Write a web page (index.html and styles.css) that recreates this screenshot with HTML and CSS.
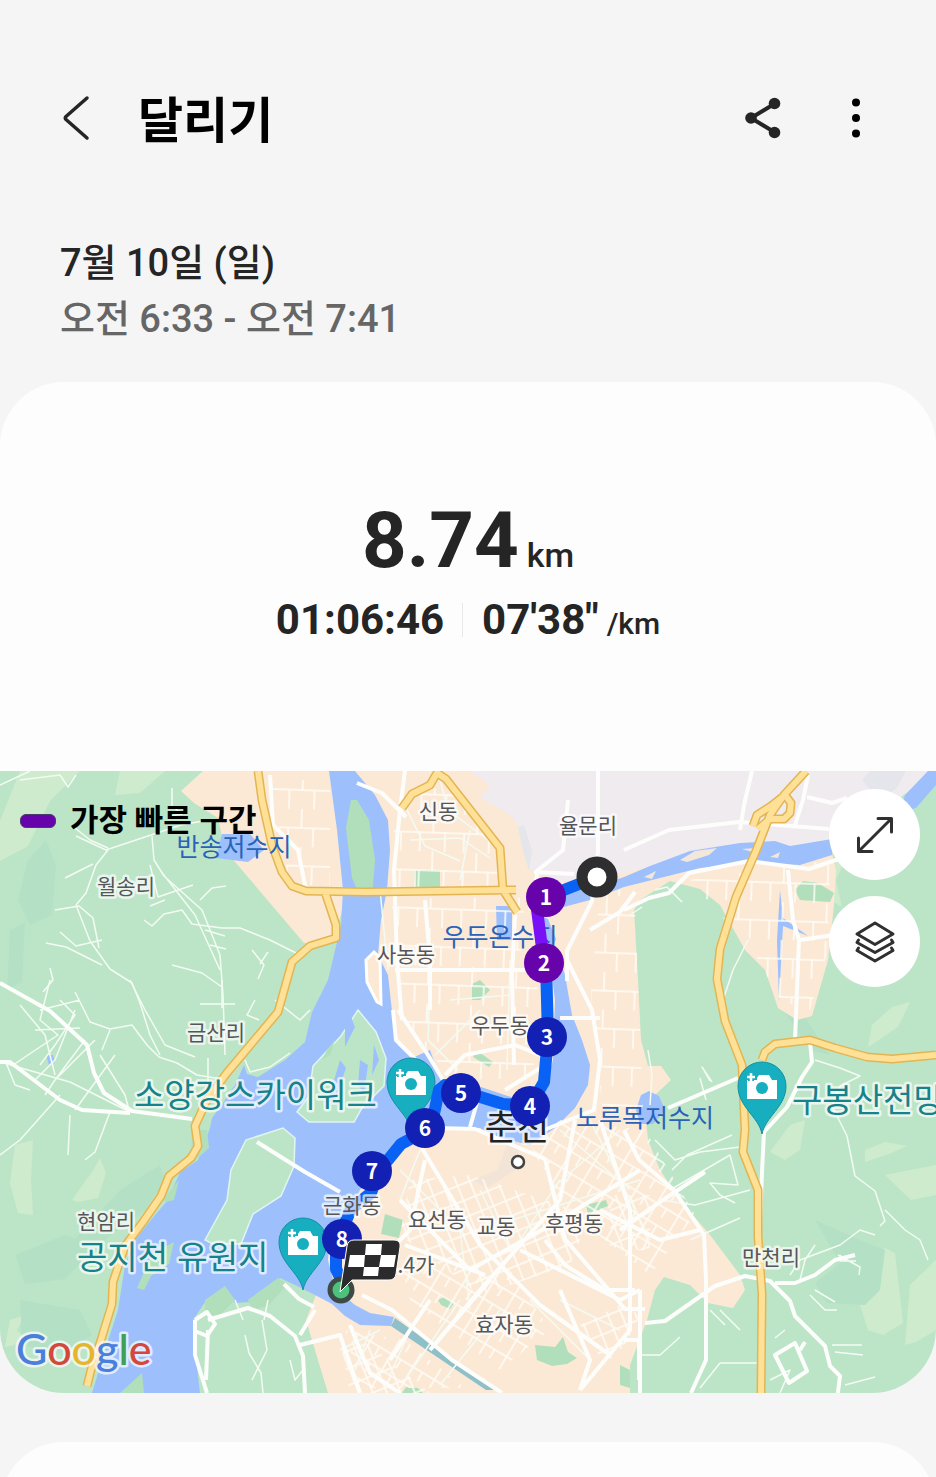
FILE: index.html
```
<!DOCTYPE html>
<html lang="ko">
	<head>
		<meta charset="utf-8">
		<meta name="viewport" content="width=device-width, initial-scale=1">
		<title>달리기</title>
		<link rel="stylesheet" href="styles.css">
	</head>
	<body>
		<header class="topbar">
			<button class="icon-btn back" type="button" aria-label="뒤로">
				<svg width="30" height="48" viewBox="0 0 30 48"><path d="M26 4 5 22.500Q3.500 24 5 25.500L26 44" fill="none" stroke="#252525" stroke-width="3.500" stroke-linecap="round" stroke-linejoin="round"/></svg>
			</button>
			<h1>달리기</h1>
			<button class="icon-btn share" type="button" aria-label="공유">
				<svg width="40" height="44" viewBox="0 0 40 44" fill="#252525"><path d="M33 7.500 9 22l24 14.500" fill="none" stroke="#252525" stroke-width="4"/><circle cx="32.500" cy="7.500" r="5.800"/><circle cx="9" cy="22" r="5.800"/><circle cx="32.500" cy="36.500" r="5.800"/></svg>
			</button>
			<button class="icon-btn more" type="button" aria-label="더보기">
				<svg width="12" height="44" viewBox="0 0 12 44"><circle cx="6" cy="6.500" r="4"/><circle cx="6" cy="22" r="4"/><circle cx="6" cy="37.500" r="4"/></svg>
			</button>
		</header>
		<div class="when">
			<p class="date">7월 10일 (일)</p>
			<p class="time">오전 6:33 - 오전 7:41</p>
		</div>
		<main class="card">
			<div class="stats">
				<p class="distance">8.74<span>km</span></p>
				<div class="detail">
					<p>01:06:46</p>
					<p class="pace">07'38"<span>/km</span></p>
				</div>
			</div>
			<div class="map">
				<svg class="map-img" viewBox="0 771 936 622" role="img" aria-label="달리기 경로 지도">
					<defs>
						<pattern id="blocks" width="44" height="38" patternUnits="userSpaceOnUse" patternTransform="rotate(2)">
							<path d="M0 19h44M22 0v19M9 19v19M34 19v19" class="lane"/>
						</pattern>
						<pattern id="city" width="25" height="19" patternUnits="userSpaceOnUse" patternTransform="rotate(31)">
							<path d="M0 9h25M8 0v19M19 9v10" class="lane"/>
						</pattern>
						<pattern id="dense" width="13" height="16" patternUnits="userSpaceOnUse" patternTransform="rotate(-22)">
							<path d="M0 7h13M6 0v16" class="lane"/>
						</pattern>
						<g id="photo-pin">
							<path d="M0 47C-3 30-24 20-24-1A24 24 0 0 1 24-1C24 20 3 30 0 47z" fill="#17aebf" stroke="#168fa3"/>
							<path d="M-15-7h10v-2l2-3h10l3 5h5v19h-30z" fill="#fff"/>
							<circle cx="0" cy="1" r="6" fill="#17aebf"/>
							<path d="M-11-15v9M-16-10.500h10" stroke="#17aebf" stroke-width="6"/>
							<path d="M-11-14v8M-15-10h8" stroke="#fff" stroke-width="2.500"/>
						</g>
						<path id="highways" d="M258 771l4 29 10 45 10 27 10 14 14 5 60 1 150-2M402 808l10-14 18-9 7-12 9 6 54 69 3 42 14 22M325 892l11 33 0 13-26 8-18 16-14 50-52 62-20 28-11 24 3 20-7 12-22 18-8 20-18 26-18 24-12 36-1 22-11 36-10 30-4 16M806 771l-22 24-14 20-14 36-20 46-16 52-3 30 8 42 17 44 3 65-2 22 15 38 0 46 4 58-1 100M762 1060l3-8 10-8 35-4 25 8 32 9 25 2 44-4M753 826l4-11 14-9 14-11 6 8-1 10-6 6-14 0-12 10"/>
					</defs>

					<!-- land -->
					<rect y="771" width="936" height="622" fill="#bce5c7"/>
					<g fill="#cfebcd">
						<path d="M20 771h60l-30 30-22 45-28 15v-40zM120 771h45l-25 22-25 2zM15 1145l18-5-2 40 2 35-15-2-8-30zM72 1200l20-28 8-14 6 15-8 25-20 4zM870 1260l15-12 10 5 8 70-20 12-15-5-8-25zM905 1345l5-60 26-25v70l-20 12zM790 1125l15-5-5 30-15 10-15-8zM872 1025l20-18 18-5-12 25-30 20zM865 1150l20-8 22 4-18 8-24 8zM885 1175l51-10v30l-25 5zM10 1320l15-5-8 15 10 12-22 5zM825 870l30-20 22 35-12 35-35-20z"/>
					</g>
					<g fill="#b4e0c5">
						<path d="M28 860l18-20 10 25-4 50-22 10-12-25zM10 930l15-8-3 60-15 8zM120 1190l40-25 5 15-20 30-40 30-40 10zM15 1255l50-20 30 12-30 32-40 5zM20 1300l60 10 12 25-30 20-40-10zM815 1220l45 20 25 10-5 40-15 15-38-2-12-20 25-20zM900 800l36-20v50l-25 5zM770 990l20 5 40 60-20-5z"/>
					</g>
					<path fill="#fbe9d6" d="M203 771H345V900L333 943H304L225 850 218 818 194 803 181 791z"/>
					<path fill="#fbe9d6" d="M340 771H580V870L625 870 700 848 830 845 836 870 834 905 828 960 812 1016 797 1020 778 1008 765 970 745 950 720 905 700 889 670 881 640 900 634 910 638 980 641 1040 648 1066 661 1066 671 1080 655 1095 645 1110 648 1140 660 1170 680 1200 710 1235 740 1275 745 1290 733 1308 708 1303 690 1285 664 1277 655 1290 647 1320 630 1365V1393H328L318 1360 306 1320 318 1290 330 1220 360 1160 365 940z"/>
					<path fill="#f0ebef" d="M470 771H936L830 850 760 845 690 855 625 873 560 882 530 870 525 835 510 815 480 797 490 785z"/>
					<path fill="#e5e6eb" d="M518 828l6-3 8 25-3 20-5-15zM862 780l8-9h36l-10 18-18 10z"/>
					<path fill="#bce5c7" d="M936 778L905 805 880 845 845 860 836 880 845 920H936z"/>
					<path fill="#b1dfbc" d="M414 870h26v18h-25zM472 984l8-4 10 10-10 10h-8zM476 1050l17 12-4 5-16-10zM385 1214l18 6-4 18-18-4zM438 1300l6-3 10 6-4 6-9-4zM535 1345l20 2 8-10 5 15 9 6-10 6-15 2-15-6zM586 1205l20-5 2 6-20 8zM620 1365l10 5v18l-10-3zM795 890l8-9 15 2 16 10-4 9-30-2zM402 1393l4-6 12 1 5 5z"/>
					<path fill="#f3e4d8" d="M472 1180l25-10 12-30 12 0-6 30-28 18z"/>

					<!-- water -->
					<path fill="#9dc0fd" d="M329 771L337 830 343 890 341 925 328 980 312 1012 305 1042 285 1060 258 1077 247 1074 244 1065 235 1085 225 1100 212 1118 210 1128 198 1160 180 1172 168 1200 155 1215 135 1240 125 1265 118 1310 105 1350 92 1393H200L195 1350 193 1320 205 1302 225 1288 235 1303 250 1302 262 1296 280 1278 295 1285 315 1295 332 1304 345 1316 360 1325 391 1326 394 1317 370 1313 355 1305 335 1288 328 1260 330 1235 345 1220 360 1190 378 1165 392 1150 405 1138 440 1127 480 1128 500 1138 530 1145 555 1128 575 1108 588 1085 590 1065 582 1040 572 1015 565 975 560 960H550L555 1000 553 1060 545 1090 520 1100 490 1090 460 1080 445 1085 437 1070 430 1050 412 1058 398 1045 393 1020 388 975 378 955 381 920 387 890 390 850 388 820 375 795 355 771z"/>
					<g fill="#9dc0fd">
						<path d="M560 890L600 885 624 877 650 866 690 851 740 843 775 841 790 846 832 839V855L800 865 750 863 700 868 660 878 624 887 590 900 560 908z"/>
						<path d="M936 771H928L905 795 900 812 916 808 936 785zM496 906h16v34h-15zM540 915l8 4 8 20-8 20-8-20zM222 834h28l14 16-16 12-32-4zM636 1110l5-15 8-4 10 5 6 14-12 14h-13zM46 1055h7l2 7-6 3zM780 890l3 28 25 18-25-10-4 76-2-62z"/>
					</g>
					<path fill="#8fc0c9" d="M395 1318l100 72h-9l-95-64z"/>
					<g fill="#bce5c7" stroke="#e2f4f1" stroke-width="1.500">
						<path d="M358 1010l18 22 10 26-2 28-22 22-8 14-45 0-12-10 12-16 4-30 28-30zM205 1240l22-40 4-30 15-30 37-12 12 10-1 28-13 30-28 18-12 30-28 0z"/>
					</g>
					<path fill="#b1dfbc" d="M351 800h6l12 20 6 40-3 36h-12l-8-18-6-50zM120 1393l22-20 2 20zM192 1130h15l2 18-18 16zM163 1200l16-20-5 20-8 2zM137 1288l15-34 22-12-5 22-18 12-7 14zM327 1050l8-10-5 15-8 5zM205 1300l20-14 10 14-15 15-15 0zM248 1300l30-22 10 6-20 22-15 4z"/>
					<path fill="#9dc0fd" d="M340 1060l6 8-12 35-6-2zM360 1060l8 5-4 28-6-8zM345 1025l6-8 4 10-10 20zM374 1045l5 15-7 15z"/>
					<path fill="#f3e6db" d="M680 860l15-9 22-3-8 7-22 7zM644 877l12-6-4 8zM742 849l14-1v5zM770 857l10-5-2 6z"/>
					<path fill="#fbe9d6" stroke="#fff" stroke-width="3" d="M366 960l8-8 6 6 1 46-4-2-10-20z"/>

					<!-- small streets -->
					<path fill="url(#blocks)" d="M395 800l50-15 55 65-2 38H392zM391 898H525l-5 60 18 30-5 90-80 2-50-60zM600 890h34l4 90 5 130-40 5-12-120zM690 880l140-20-2 90-18 60-30-10-30-55-50-50zM270 780h60v105h-40z"/>
					<path fill="url(#city)" d="M345 1330l60 10 60 48H360zM560 1120l85 10 50 85-45 60-90-70-30-60zM400 1260l110 10 40 60-50 40-90-70z"/>
					<path fill="url(#dense)" d="M410 1180l60-5 120 40-20 50-90 30-80-60zM340 1340l30 5 60 48h-80zM580 1325l40-20 20 10-15 30-20 20zM610 1195h40v55h-40z"/>
					<g class="lane thin">
						<path d="M0 785l30-14M20 780l40-5 8 12 8-12M172 788v18l10 8-12 2M75 828l15 12 18 8M76 836l30 14 45-15 30-10 22-4M108 850l-12 15-10 28-10 12M65 878l28-14M76 905l14 36 20 28 22 14 8 20 10 32 10 20M55 910l24-4 14 12 6 30M60 932l16 14 26-6M46 943l20 4 36 18M152 836l2 24 10 16 38 34 18 45 3 40 2 60M160 870l35 45 25 55M150 865l8 32 35-12M165 900l-15 6M200 900l12-12 14-2M144 920l8 6 12-12 18-4 10 14 30 4 18 0 30 12 30 15M172 965l30 8 20 14M205 930l20 6M210 945l16 4M50 968l3 12-10 12M252 950l12 15-6 14M268 952l-8 12"/>
						<path d="M0 1062l35 10 35 10 40 20 20 10M20 1005l25 30 10 40M50 980l-10 40 18 15-45 30M60 1000l15 15-20 30-15 20M75 1010l-20 50-20 20M85 1040l-30 40-10 15M40 1010l40-10M35 1030l45-2M100 1055l25 40 4 15M115 1055l-40 55M95 1040l-40 40M60 1095l-40 45-20 15M70 1115l-2 40M110 1112l-15 40-10 8M5 1060l10 25 15 5M75 992l15 30 20 7 22-4 15 20 12 12 18 6 20 12 30 5M130 980l15 30 20 35 30 12M110 1030l-8 20M222 980v28M200 1004h35M208 1058v25M245 1060l5 12 20-5 20-14M275 1000l25 20 10-10M255 1000l-8 15 12 5"/>
						<path d="M245 1335l4 18 12 20 2 20M262 1320l5 30-15 30M235 1300l8 20M268 1300l-4 20M290 1360l5 20 8-10"/>
						<path d="M655 890l12-3 15 15M630 915l12-8M648 1050l4 25-2 30M655 1140l20 20 25-8 40-5M672 1170l15-15 45-20M670 1190l60-35 8 30-28-2 10 12 15 8M660 1200l35 5 55-15M690 1240l50-22M712 1082l-10-15 8 14M706 1100l-6-22M748 940l-15 30-10 30"/>
						<path d="M815 1060l25 8 20 8-20 10-8 20 15 30 8 40 20 15 10 30-5 5M885 1210l20 20 15 10 8 20M790 1275l10-15 40-15 20-15 15 5M800 1280l5-20 10-15M810 1295l15 15 12 0M815 1290l20 12M840 1255l6 6-6 0 16 0M838 1255l22 12-1 8M770 1380l20-10-10 23M832 1345l30 0M835 1352l28 3M720 1310l20 20M710 1310l15 15M760 1363l-40 0-20 25M640 1355l20 0 20-18M785 1330l-10 8M900 1393l10-10M845 1385l30-8"/>
						<path d="M380 890l8 80M405 806l20 40 35 15M410 840l50-2 30 20M415 870v20M470 830l-10 50M440 780l8 30 40 30M430 985l-2 55 30 30M450 1000l60-5M510 960l-3 110M480 1010l-45 45M530 1300l60 60M560 1180l-60 90M620 1130l-70 60M640 1180l-160 50M560 1130l70 60M590 1120l60 120M400 1170l60 60 10 80M420 1150l-20 50M480 1190l30 60M340 1350l40-20M560 1300l60 30M460 1300l-55 80M500 1310l-60 75M370 1330l-15 40M410 1330l-20 45"/>
					</g>

					<!-- main streets -->
					<g class="street">
						<path d="M0 983l50 28 37 34 7 28 10 20 28 18 60 8M0 1062l10 0 50 38 22 10 48 3M257 1142l48 30 35 20M405 770l-5 40-6 60 3 90 5 60M357 783l25 10 24 24M270 775l3 50 25 25 8 40"/>
						<path d="M395 970h145M425 900l5 60 0 50M515 915l-3 60 2 90M398 1010l30 45 15 25M393 1010l3 30 20 20M445 1075l20-20 50-10 25 10M480 1092l-10 35M505 1090l40-25M435 1128l40 1 70 30 20 80 60 70 20 0M567 960l25 50 8 50-6 50-50 20M598 771v80l-6 50-25 50 0 30M568 800l-5 50-25 20-8 40M534 872l40 2M590 930l30-18 15-20M560 1018h40"/>
						<path d="M420 1145l60 100 60 60 70 50M425 1160l-15 70-30 30M400 1200l70 70 90-50 80-50M575 1120l-15 80-80 90-50 60M600 1120l30 90 0 120-50 60M520 1250l100 50 20-10M600 1210l60 30 40-10M362 1295l30 15 60 50 50 33M350 1325l10 25 10 23 30 20M300 1345l40-10 20 58M545 1240l20 25 40 25 30 0M560 1290l30 70-10 30M405 1245l80 30M430 1300l-40 60M490 1280l-60 70"/>
						<path d="M624 850l45-20 70-8 90 7M624 910l25-12 20-5 20-20 60-12 60 8 30-10M740 830l4-25 8-34M795 825l8-25 5-25M807 797l25 6 15-5M788 870l5 50 6 20-4 100M800 940l40-6M810 1042l2 20-10 15-15 30-23 25-2 40-2 50M668 1108l35-15 35-15M624 1130l15 30 35 30 30 45 2 45 0 80-15 33M620 1230l40-28 45-30M645 1323l20-2 50-35 30-10 25 5 20 20 5 15 30 30 5 20 10 10-3 24M640 1290v103M775 1283l20 0 20-8 20-15 20-5M624 1340l15 0v40"/>
						<path d="M284 1284l15 15 15 8M195 1320l12-8 8 12-8 12-12-5M195 1320v35l12 38M208 1330l-2 50M208 1320l40-12 22 8 25 20 8 20 2 37M300 1335l15-25M775 1355l20-12 12 28-18 12zM800 1350l5-8"/>
					</g>

					<use href="#highways" class="highway"/>
					<use href="#highways" class="highway-fill"/>

					<g class="lake">
						<text x="234" y="856">반송저수지</text>
						<text x="500" y="946">우두온수지</text>
						<text x="645" y="1127">노루목저수지</text>
					</g>
					<text class="town" x="517" y="1140">춘천</text>
					<circle cx="518" cy="1162" r="6" fill="#fff" stroke="#444" stroke-width="2.500"/>
					<use href="#photo-pin" x="411" y="1083"/>
					<use href="#photo-pin" x="762" y="1087"/>
					<use href="#photo-pin" x="303" y="1243"/>

					<!-- route -->
					<g fill="none" stroke="#0a62f5" stroke-width="12" stroke-linejoin="round">
						<path d="M597 877l-51 20M546 963l2 74-4 45-14 24-27-2-42-13-16-6-6 5-8 38-30 16-22 27-8 22-20 16-10 24-5 20 0 16 8 16"/>
						<path d="M536 902l8 61" stroke="#7a10f5"/>
					</g>

					<g class="place">
						<text x="126" y="894">월송리</text>
						<text x="438" y="819">신동</text>
						<text x="588" y="833">율문리</text>
						<text x="406" y="962">사농동</text>
						<text x="500" y="1033">우두동</text>
						<text x="216" y="1040">금산리</text>
						<text x="106" y="1229">현암리</text>
						<text x="352" y="1213">근화동</text>
						<text x="437" y="1227">요선동</text>
						<text x="496" y="1234">교동</text>
						<text x="574" y="1231">후평동</text>
						<text x="416" y="1273">.4가</text>
						<text x="504" y="1332">효자동</text>
						<text x="771" y="1265">만천리</text>
					</g>
					<g class="sight">
						<text x="134" y="1107">소양강스카이워크</text>
						<text x="77" y="1269">공지천 유원지</text>
						<text x="792" y="1112">구봉산전망</text>
					</g>

					<!-- lap markers -->
					<circle cx="597" cy="877" r="15" fill="#fff" stroke="#2e2e30" stroke-width="11"/>
					<g fill="#1220b4">
						<circle cx="547" cy="1037" r="20"/><circle cx="530" cy="1106" r="20"/><circle cx="461" cy="1093" r="20"/><circle cx="425" cy="1128" r="20"/><circle cx="372" cy="1171" r="20"/><circle cx="342" cy="1239" r="20"/>
					</g>
					<g fill="#6703ab"><circle cx="546" cy="897" r="20"/><circle cx="544" cy="963" r="20"/></g>
					<g class="lap">
						<text x="546" y="905">1</text>
						<text x="544" y="971">2</text>
						<text x="547" y="1045">3</text>
						<text x="530" y="1114">4</text>
						<text x="461" y="1101">5</text>
						<text x="425" y="1136">6</text>
						<text x="372" y="1179">7</text>
						<text x="342" y="1247">8</text>
					</g>
					<circle cx="341" cy="1290" r="11" fill="#4cc27c" stroke="#3e4a45" stroke-width="5"/>
					<path d="M340 1292l7-46q1-6 7-6h40q7 0 6 7l-4 27q-1 6-7 6h-37z" fill="#2b2b2d" stroke="#fff" stroke-width="1"/>
					<path d="M366 1244h16l-1 11h-16zM350 1255h15l-1 12h-16zM381 1255h15l-2 12h-15zM364 1267h15l-1 9h-15z" fill="#fff"/>
					<text class="google" x="16" y="1365"><tspan fill="#4a80dc">G</tspan><tspan fill="#d3483d">o</tspan><tspan fill="#e5b530">o</tspan><tspan fill="#4a80dc">g</tspan><tspan fill="#3f9f57">l</tspan><tspan fill="#d3483d">e</tspan></text>
				</svg>
				<p class="legend">가장 빠른 구간</p>
				<div class="map-tools">
					<button type="button" aria-label="지도 확대">
						<svg width="40" height="40" viewBox="0 0 40 40"><path d="M4 36 36 4M23 3.500h13.500V17M3.500 23v13.500H17"/></svg>
					</button>
					<button type="button" aria-label="지도 종류">
						<svg width="42" height="42" viewBox="0 0 42 42"><path d="M21 2 39 13 21 23.500 3 13zM4.500 19 3 21.500 21 31.500 39 21.500 37.500 19M4.500 27 3 29.500 21 40 39 29.500 37.500 27"/></svg>
					</button>
				</div>
			</div>
		</main>
		<div class="next"><section class="next-card"></section></div>
	</body>
</html>
```
FILE: styles.css
```
* {
	box-sizing: border-box;
}
body {
	display: flex;
	flex-direction: column;
	min-height: 100vh;
	margin: 0;
	background-color: #f5f5f5;
	color: #252525;
	font-family: Roboto, "Noto Sans CJK KR", sans-serif;
}
h1, p {
	margin: 0;
}
button {
	display: flex;
	align-items: center;
	justify-content: center;
	padding: 0;
	border: none;
	background: none;
	cursor: pointer;
}
svg {
	display: block;
}
.topbar {
	display: flex;
	align-items: center;
	padding: 78px 56px 0 52px;
	height: 158px;
}
.icon-btn {
	width: 48px;
	height: 64px;
}
.topbar h1 {
	flex: 1;
	margin-left: 38px;
	padding-top: 7px;
	color: #000;
	font-size: 49px;
	line-height: 72px;
	font-weight: 700;
}
.share {
	margin-right: 46px;
}
.when {
	padding: 77px 60px 35px;
	font-size: 38px;
	line-height: 56px;
	font-weight: 500;
}
.time {
	color: #666;
}
.card {
	overflow: hidden;
	border-radius: 64px;
	background-color: #fdfdfd;
}
.stats {
	padding: 115px 24px 123px;
	text-align: center;
	font-weight: 700;
}
.distance {
	font-size: 78px;
	line-height: 88px;
}
.distance span {
	margin-left: 8px;
	font-size: 34px;
	line-height: 40px;
	font-weight: 500;
}
.detail {
	display: flex;
	justify-content: center;
	margin-top: 7px;
	font-size: 42px;
	line-height: 56px;
}
.pace {
	margin-left: 18px;
	padding-left: 20px;
	background: linear-gradient(#e8e8e8, #e8e8e8) left center / 1px 34px no-repeat;
}
.pace span {
	margin-left: 8px;
	font-size: 30px;
	line-height: 40px;
	font-weight: 500;
}

/* map */
.map {
	position: relative;
}
.map-img {
	width: 100%;
	height: auto;
	font-family: "Noto Sans CJK KR", sans-serif;
}
.lane {
	fill: none;
	stroke: #fffdf8;
	stroke-width: 1.5;
}
.thin {
	stroke: #f3fbf3;
}
.thin path, .street path {
	stroke-linejoin: round;
}
.street {
	fill: none;
	stroke: #fdfefc;
	stroke-width: 4;
}
.highway, .highway-fill {
	fill: none;
	stroke: #e3b552;
	stroke-width: 9;
	stroke-linejoin: round;
}
.highway-fill {
	stroke: #fee196;
	stroke-width: 6;
}
.place, .lake, .sight, .town, .google {
	paint-order: stroke;
	stroke: #fff;
	stroke-width: 5px;
	stroke-linejoin: round;
	stroke-opacity: 0.7;
}
.place {
	fill: #555659;
	font-size: 21px;
	text-anchor: middle;
}
.lake {
	fill: #2a62b8;
	stroke: none;
	font-size: 25px;
	text-anchor: middle;
}
.sight {
	fill: #16828a;
	font-size: 33px;
}
.town {
	fill: #222;
	font-size: 35px;
	text-anchor: middle;
}
.lap {
	fill: #fff;
	font-size: 21px;
	font-weight: 700;
	text-anchor: middle;
}
.google {
	font-family: Lato, sans-serif;
	font-size: 43px;
	font-weight: 500;
}
.legend {
	position: absolute;
	top: 28px;
	left: 20px;
	display: flex;
	align-items: center;
	gap: 14px;
	color: #000;
	font-size: 31px;
	line-height: 44px;
	font-weight: 700;
}
.legend::before {
	content: "";
	width: 34px;
	height: 12px;
	border: 1px solid #4b3a6b;
	border-radius: 6px;
	background-color: #6703ab;
}
.map-tools {
	position: absolute;
	top: 18px;
	right: 16px;
	display: flex;
	flex-direction: column;
	gap: 16px;
}
.map-tools button {
	width: 91px;
	height: 91px;
	border-radius: 50%;
	background-color: #fff;
}
.map-tools svg {
	fill: none;
	stroke: #303030;
	stroke-width: 3;
	stroke-linecap: round;
	stroke-linejoin: round;
}

/* only the top of the following card shows */
.next {
	flex: 1;
	min-height: 35px;
	margin-top: 49px;
	overflow: hidden;
}
.next-card {
	height: 160px;
	margin-bottom: -125px;
	border-radius: 64px;
	background-color: #fdfdfd;
}
```
